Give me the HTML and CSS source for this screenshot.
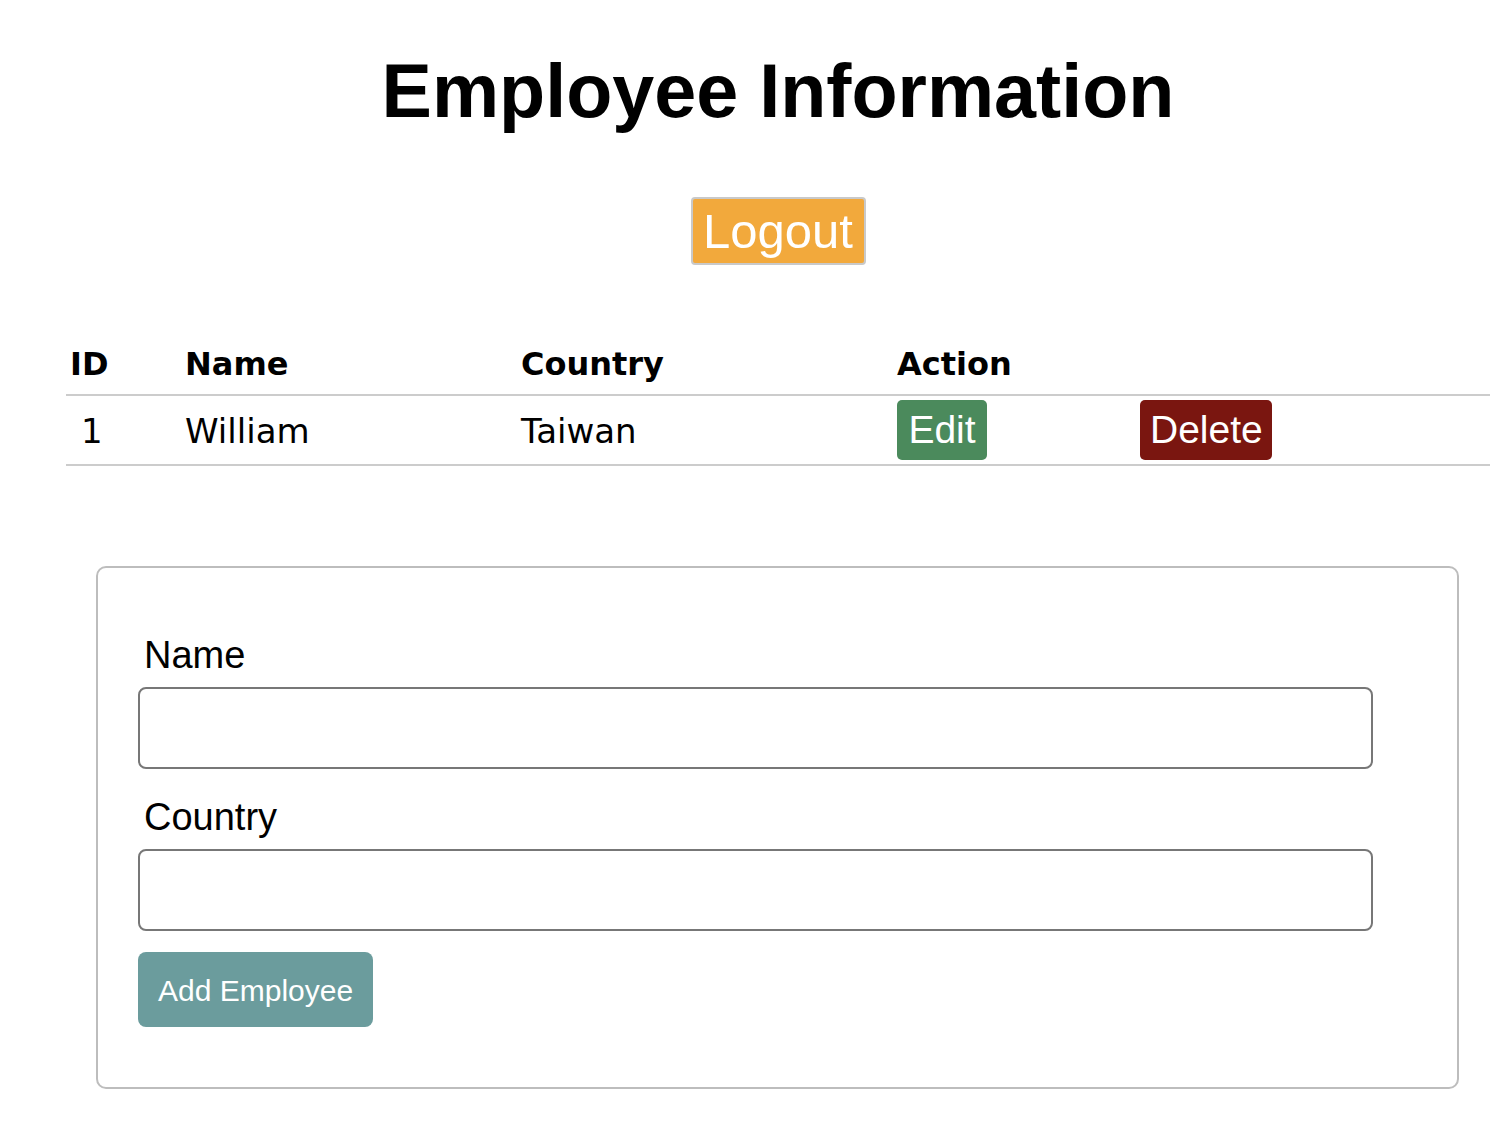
FILE: index.html
```html
<!DOCTYPE html>
<html lang="en">
<head>
<meta charset="utf-8">
<title>Employee Information</title>
<link rel="stylesheet" href="styles.css">
</head>
<body>
<div class="page">
  <h1 class="title">Employee Information</h1>
  <div class="logout-row"><button class="btn-logout">Logout</button></div>
  <table class="emp-table">
    <colgroup>
      <col class="c-id"><col class="c-name"><col class="c-country"><col class="c-action"><col class="c-extra">
    </colgroup>
    <thead>
      <tr><th>ID</th><th>Name</th><th>Country</th><th>Action</th><th></th></tr>
    </thead>
    <tbody>
      <tr>
        <td class="td-id">1</td>
        <td>William</td>
        <td>Taiwan</td>
        <td><button class="btn btn-edit">Edit</button></td>
        <td><button class="btn btn-delete">Delete</button></td>
      </tr>
    </tbody>
  </table>
  <form class="card">
    <label class="lbl">Name</label>
    <input class="inp" type="text">
    <label class="lbl">Country</label>
    <input class="inp inp-last" type="text">
    <button type="button" class="btn-add">Add Employee</button>
  </form>
</div>
</body>
</html>
```
FILE: styles.css
```css
html, body { margin: 0; padding: 0; background: #fff; }
body { font-family: "Liberation Sans", Arial, sans-serif; color: #000; }
.page { margin-left: 66px; width: 1424px; padding-top: 48px; }
.title { margin: 0; text-align: center; font-size: 75.5px; line-height: 86px; font-weight: bold; }
.logout-row { display: flex; justify-content: center; margin-top: 63px; }
.btn-logout {
  font-family: "Liberation Sans", Arial, sans-serif;
  font-size: 49px; line-height: 56px; color: #fff;
  background: #f2a93c; border: 2px solid #c9c9c9; border-radius: 4px;
  padding: 4px 10px; margin: 0; width: 175px; white-space: nowrap;
}
.emp-table { width: 1424px; border-collapse: collapse; margin-top: 79px; table-layout: fixed; }
.c-id { width: 115px; } .c-name { width: 336px; } .c-country { width: 376px; } .c-action { width: 243px; } .c-extra { width: 354px; }
.emp-table th {
  font-family: "DejaVu Sans", sans-serif; font-weight: bold; font-size: 32px; line-height: 40px;
  text-align: left; padding: 0 4px 10px 4px; border-bottom: 2px solid #cccccc;
}
.emp-table td {
  font-family: "DejaVu Sans", sans-serif; font-size: 34px; line-height: 40px;
  text-align: left; padding: 4px 4px; border-bottom: 2px solid #cccccc; vertical-align: baseline;
}
.emp-table td.td-id { padding-left: 15px; }
.btn {
  font-family: "Liberation Sans", Arial, sans-serif; font-size: 39px; line-height: 46px;
  color: #fff; border: none; border-radius: 5px; padding: 7px 10px; margin: 0; white-space: nowrap;
}
.btn-edit { background: #4b8a5c; width: 90px; }
.btn-delete { background: #7a1610; width: 132px; }
.card {
  display: flex; flex-direction: column; align-items: flex-start;
  margin: 100px 30px 0 30px; border: 2px solid #bdbdbd; border-radius: 10px;
  padding: 67px 40px 60px 40px; box-sizing: border-box; width: 1363px;
}
.lbl { font-size: 38px; line-height: 41px; padding-left: 6px; margin-bottom: 11px; }
.inp {
  width: 1235px; height: 82px; box-sizing: border-box; border: 2px solid #777;
  border-radius: 8px; margin: 0 0 28px 0; padding: 0 12px; font-size: 30px;
}
.inp.inp-last { margin-bottom: 21px; }
.btn-add {
  font-family: "Liberation Sans", Arial, sans-serif; font-size: 30px; line-height: 30px;
  color: #fff; background: #6b9c9d; border: none; border-radius: 8px;
  padding: 24px 20px 21px 20px; width: 235px; margin: 0; white-space: nowrap;
}
```
